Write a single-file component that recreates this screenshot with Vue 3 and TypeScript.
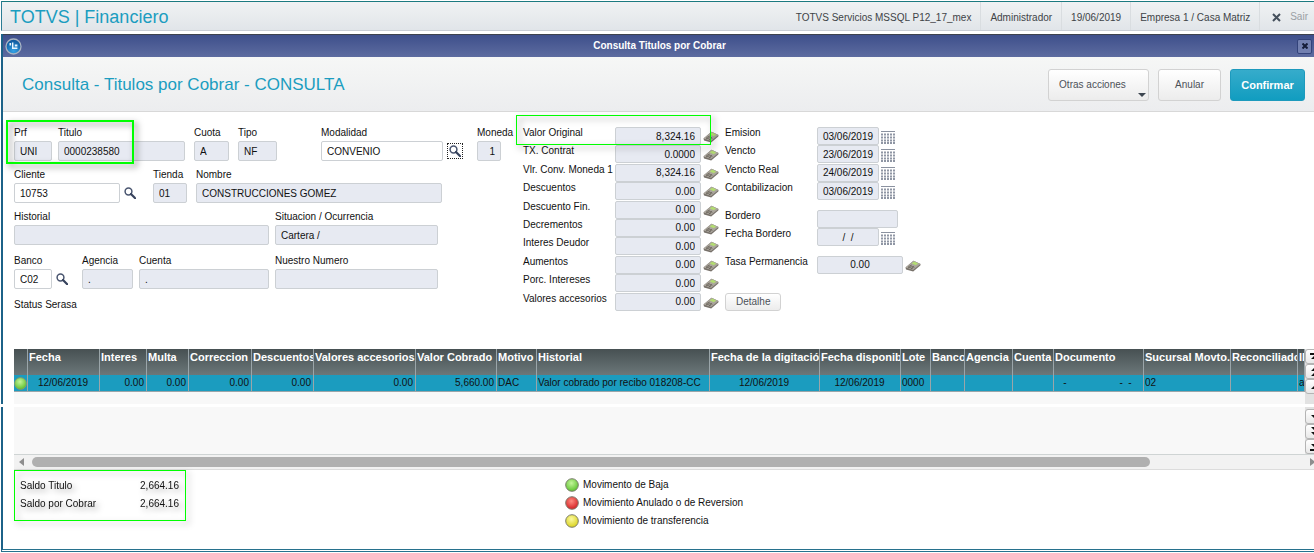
<script setup lang="ts">
import { ref } from 'vue'

interface Field {
  id: string
  label: string
  value: string
  editable?: boolean
  lookup?: boolean
  focused?: boolean
}

interface Column {
  title: string
  width: number
  value: string
  align: 'left' | 'center' | 'right'
}

const session = ['TOTVS Servicios MSSQL P12_17_mex', 'Administrador', '19/06/2019', 'Empresa 1 / Casa Matriz']

const rows = ref<Field[][]>([
  [
    { id: 'prf', label: 'Prf', value: 'UNI' },
    { id: 'titulo', label: 'Titulo', value: '0000238580' },
    { id: 'cuota', label: 'Cuota', value: 'A' },
    { id: 'tipo', label: 'Tipo', value: 'NF' },
    { id: 'modalidad', label: 'Modalidad', value: 'CONVENIO', editable: true, lookup: true, focused: true },
    { id: 'moneda', label: 'Moneda', value: '1' },
  ],
  [
    { id: 'cliente', label: 'Cliente', value: '10753', editable: true, lookup: true },
    { id: 'tienda', label: 'Tienda', value: '01' },
    { id: 'nombre', label: 'Nombre', value: 'CONSTRUCCIONES GOMEZ' },
  ],
  [
    { id: 'historial', label: 'Historial', value: '' },
    { id: 'situacion', label: 'Situacion / Ocurrencia', value: 'Cartera /' },
  ],
  [
    { id: 'banco', label: 'Banco', value: 'C02', editable: true, lookup: true },
    { id: 'agencia', label: 'Agencia', value: '.' },
    { id: 'cuenta', label: 'Cuenta', value: '.' },
    { id: 'numero', label: 'Nuestro Numero', value: '' },
  ],
])

const amounts = [
  { label: 'Valor Original', value: '8,324.16' },
  { label: 'TX. Contrat', value: '0.0000' },
  { label: 'Vlr. Conv. Moneda 1', value: '8,324.16' },
  { label: 'Descuentos', value: '0.00' },
  { label: 'Descuento Fin.', value: '0.00' },
  { label: 'Decrementos', value: '0.00' },
  { label: 'Interes Deudor', value: '0.00' },
  { label: 'Aumentos', value: '0.00' },
  { label: 'Porc. Intereses', value: '0.00' },
  { label: 'Valores accesorios', value: '0.00' },
]

const dates = [
  { id: 'emision', label: 'Emision', value: '03/06/2019', kind: 'date' },
  { id: 'vencto', label: 'Vencto', value: '23/06/2019', kind: 'date' },
  { id: 'vencto-real', label: 'Vencto Real', value: '24/06/2019', kind: 'date' },
  { id: 'contab', label: 'Contabilizacion', value: '03/06/2019', kind: 'date' },
  { id: 'bordero', label: 'Bordero', value: '', kind: 'text' },
  { id: 'fecha-bordero', label: 'Fecha Bordero', value: '/  /', kind: 'date' },
  { id: 'tasa', label: 'Tasa Permanencia', value: '0.00', kind: 'amount' },
]

const columns: Column[] = [
  { title: 'Fecha', width: 72, value: '12/06/2019', align: 'center' },
  { title: 'Interes', width: 47, value: '0.00', align: 'right' },
  { title: 'Multa', width: 42, value: '0.00', align: 'right' },
  { title: 'Correccion', width: 63, value: '0.00', align: 'right' },
  { title: 'Descuentos', width: 62, value: '0.00', align: 'right' },
  { title: 'Valores accesorios', width: 102, value: '0.00', align: 'right' },
  { title: 'Valor Cobrado', width: 81, value: '5,660.00', align: 'right' },
  { title: 'Motivo', width: 40, value: 'DAC', align: 'left' },
  { title: 'Historial', width: 173, value: 'Valor cobrado por recibo 018208-CC', align: 'left' },
  { title: 'Fecha de la digitación', width: 110, value: '12/06/2019', align: 'center' },
  { title: 'Fecha disponib.', width: 81, value: '12/06/2019', align: 'center' },
  { title: 'Lote', width: 30, value: '0000', align: 'left' },
  { title: 'Banco', width: 34, value: '', align: 'left' },
  { title: 'Agencia', width: 48, value: '', align: 'left' },
  { title: 'Cuenta', width: 41, value: '', align: 'left' },
  { title: 'Documento', width: 90, value: '   -                   -  -', align: 'left' },
  { title: 'Sucursal Movto.', width: 87, value: '02', align: 'left' },
  { title: 'Reconciliado', width: 67, value: '', align: 'left' },
  { title: 'ID', width: 7, value: 'a', align: 'left' },
]

const topArrows = [
  { name: 'Primero', path: 'M1 2h10v2H1z M6 4l4 4H2z' },
  { name: 'Página anterior', path: 'M6 1l4 4H2z M6 6l4 4H2z' },
  { name: 'Anterior', path: 'M6 4l4 4H2z' },
]
const bottomArrows = [
  { name: 'Siguiente', path: 'M6 8l4-4H2z' },
  { name: 'Página siguiente', path: 'M6 5l4-4H2z M6 10l4-4H2z' },
  { name: 'Último', path: 'M6 7l4-4H2z M1 8h10v2H1z' },
]

const legend = [
  { color: 'green', text: 'Movimento de Baja' },
  { color: 'red', text: 'Movimiento Anulado o de Reversion' },
  { color: 'yellow', text: 'Movimiento de transferencia' },
]
</script>

<template>
  <div class="app">
    <svg class="defs" aria-hidden="true">
      <defs>
        <radialGradient id="g-green" cx=".45" cy=".35" r=".65"><stop offset="0" stop-color="#c4f59a" /><stop offset="1" stop-color="#5cc22e" /></radialGradient>
        <radialGradient id="g-red" cx=".45" cy=".35" r=".65"><stop offset="0" stop-color="#ff8a80" /><stop offset="1" stop-color="#d31f22" /></radialGradient>
        <radialGradient id="g-yellow" cx=".45" cy=".35" r=".65"><stop offset="0" stop-color="#fbf9a0" /><stop offset="1" stop-color="#d9d21c" /></radialGradient>
        <radialGradient id="g-blue" cx=".5" cy=".8" r=".8"><stop offset="0" stop-color="#35a3e6" /><stop offset="1" stop-color="#0a4f94" /></radialGradient>
        <symbol id="lens" viewBox="0 0 12 12">
          <circle cx="4.5" cy="4.5" r="3.4" fill="#fff" stroke="#4a5670" stroke-width="1.5" />
          <path d="M7 7l4.2 4.2" stroke="#36425c" stroke-width="2.2" stroke-linecap="round" />
        </symbol>
        <symbol id="calc" viewBox="0 0 16 12">
          <path d="M.5 7.5L8.5.8 15.5 4 15.3 5.6 8.2 11.6 1 9.4z" fill="#77716a" />
          <path d="M.5 7.5L8.5.8 15.5 4 8 10z" fill="#aaa59c" />
          <path d="M6.7 3.6L9.2 1.6 13.2 3.4 10.8 5.3z" fill="#b3dc72" />
          <path d="M3 6.7l4.8 2M4.6 5.4l4.8 2M3 8.2L6.6 5M6 9L9 6.2" stroke="#686259" stroke-width=".8" />
        </symbol>
        <symbol id="calendar" viewBox="0 0 14 13">
          <path d="M0 .5h14" stroke="#8b92a0" />
          <path d="M0 3.5h14M0 6.5h14M0 9.5h14M0 12h14" stroke="#8f96a4" stroke-width="2" stroke-dasharray="2 1" />
        </symbol>
      </defs>
    </svg>

    <header class="topbar">
      <h1 class="brand">TOTVS | Financiero</h1>
      <ul class="session">
        <li v-for="item in session" :key="item">{{ item }}</li>
      </ul>
      <button class="exit" type="button">
        <svg width="9" height="9" viewBox="0 0 9 9"><path d="M1 1l7 7M8 1L1 8" stroke="#45505c" stroke-width="2" /></svg>
        Sair
      </button>
    </header>

    <main class="window">
      <div class="titlebar">
        <svg class="logo" width="17" height="17" viewBox="0 0 17 17">
          <circle cx="8.5" cy="8.5" r="7.5" fill="url(#g-blue)" stroke="#a9b3c2" stroke-width="1.3" />
          <path d="M4.5 5h1.6v2.5H4.5zM7 4.5h1.4v5h4V11H7zM9.8 6.5h2.6v2H9.8z" fill="#e9f6ff" />
        </svg>
        <h2>Consulta Titulos por Cobrar</h2>
        <button class="close" type="button" aria-label="Cerrar">
          <svg width="6" height="6" viewBox="0 0 6 6"><path d="M.5.5l5 5M5.5.5l-5 5" stroke="#141c38" stroke-width="2" /></svg>
        </button>
      </div>

      <div class="toolbar">
        <h3>Consulta - Titulos por Cobrar - CONSULTA</h3>
        <button class="btn more" type="button">
          Otras acciones
          <svg class="caret" width="8" height="4" viewBox="0 0 8 4"><path d="M0 0h8L4 4z" fill="#3d4650" /></svg>
        </button>
        <button class="btn" type="button">Anular</button>
        <button class="btn primary" type="button">Confirmar</button>
      </div>

      <form class="form" @submit.prevent>
        <section class="main-fields">
          <div v-for="(row, i) in rows" :key="i" class="row" :class="'row-' + (i + 1)">
            <div v-for="f in row" :key="f.id" class="field" :class="'f-' + f.id">
              <label :for="f.id">{{ f.label }}</label>
              <div class="control">
                <input :id="f.id" v-model="f.value" type="text" :readonly="!f.editable" />
                <button v-if="f.lookup" class="lookup" :class="{ focused: f.focused }" type="button" :aria-label="'Buscar ' + f.label">
                  <svg width="12" height="12"><use href="#lens" /></svg>
                </button>
              </div>
            </div>
          </div>
          <p class="status">Status Serasa</p>
          <div class="mark mark-title"></div>
        </section>

        <section class="amounts">
          <div v-for="(a, i) in amounts" :key="a.label" class="amount">
            <label :for="'amount-' + i">{{ a.label }}</label>
            <input :id="'amount-' + i" class="num" type="text" :value="a.value" readonly />
            <button class="tool" type="button" :aria-label="'Calculadora ' + a.label"><svg width="16" height="12"><use href="#calc" /></svg></button>
          </div>
          <div class="mark mark-amount"></div>
        </section>

        <section class="dates">
          <div v-for="d in dates" :key="d.id" class="date" :class="['d-' + d.id, d.kind]">
            <label :for="d.id">{{ d.label }}</label>
            <input :id="d.id" type="text" :value="d.value" readonly />
            <button v-if="d.kind === 'date'" class="tool" type="button" :aria-label="'Calendario ' + d.label"><svg width="14" height="13"><use href="#calendar" /></svg></button>
            <button v-if="d.kind === 'amount'" class="tool" type="button" :aria-label="'Calculadora ' + d.label"><svg width="16" height="12"><use href="#calc" /></svg></button>
          </div>
          <button class="btn detail" type="button">Detalhe</button>
        </section>
      </form>

      <section class="browse">
        <div class="grid">
          <table>
            <colgroup>
              <col class="c-flag" />
              <col v-for="c in columns" :key="c.title" :style="{ width: c.width + 'px' }" />
            </colgroup>
            <thead>
              <tr>
                <th></th>
                <th v-for="c in columns" :key="c.title">{{ c.title }}</th>
              </tr>
            </thead>
            <tbody>
              <tr>
                <td class="flag"><svg width="13" height="13" viewBox="0 0 14 14"><circle cx="7" cy="7" r="6.3" fill="url(#g-green)" stroke="#8a9a6a" /></svg></td>
                <td v-for="c in columns" :key="c.title" :class="c.align">{{ c.value }}</td>
              </tr>
            </tbody>
          </table>
          <div class="scroll-v">
            <button v-for="a in topArrows" :key="a.name" type="button" :aria-label="a.name"><svg width="12" height="11"><path :d="a.path" fill="#111" /></svg></button>
            <span class="spring"></span>
            <button v-for="a in bottomArrows" :key="a.name" type="button" :aria-label="a.name"><svg width="12" height="11"><path :d="a.path" fill="#111" /></svg></button>
          </div>
        </div>
        <div class="scroll-h">
          <svg width="5" height="8" viewBox="0 0 5 8"><path d="M5 0v8L0 4z" fill="#8e8e8e" /></svg>
          <div class="track"><div class="thumb"></div></div>
          <svg width="4" height="8" viewBox="0 0 4 8"><path d="M0 0v8l4-3V3z" fill="#8e8e8e" /></svg>
        </div>
        <div class="tear"></div>
      </section>

      <footer class="summary">
        <dl class="balance">
          <dt>Saldo Titulo</dt><dd>2,664.16</dd>
          <dt>Saldo por Cobrar</dt><dd>2,664.16</dd>
        </dl>
        <ul class="legend">
          <li v-for="l in legend" :key="l.color">
            <svg width="14" height="14" viewBox="0 0 14 14"><circle cx="7" cy="7" r="6.3" :fill="`url(#g-${l.color})`" stroke="#7d7d70" /></svg>
            {{ l.text }}
          </li>
        </ul>
      </footer>
    </main>
  </div>
</template>

<style>
body {
  background: #fff;
}
</style>

<style scoped>
* {
  box-sizing: border-box;
}
.app {
  position: relative;
  display: flex;
  flex-direction: column;
  min-height: 100vh;
  padding: 1px 0 1px 1px;
  overflow: hidden;
  font: 10px/12px "Liberation Sans", Arial, sans-serif;
  color: #111;
}
.defs {
  position: absolute;
  width: 0;
  height: 0;
}
h1, h2, h3, p, ul, dl, dd {
  margin: 0;
  padding: 0;
  font-weight: normal;
  list-style: none;
}
button, input {
  font: inherit;
  color: inherit;
  margin: 0;
  padding: 0;
}
button {
  border: 0;
  background: none;
}
svg {
  display: block;
  flex: none;
}

.topbar {
  display: flex;
  align-items: stretch;
  height: 30px;
  border-top: 1px solid #1c7a80;
  border-left: 1px solid #2c7c94;
  border-bottom: 1px solid #c9ced6;
  background: linear-gradient(#f0f2f3, #e1e5e9);
  color: #3e4347;
}
.brand {
  flex: 1;
  padding-left: 8px;
  font-size: 18px;
  line-height: 31px;
  color: #1b9dc0;
}
.session {
  display: flex;
}
.session li {
  padding: 0 9px;
  line-height: 31px;
  border-right: 1px solid #d9dde0;
}
.exit {
  display: flex;
  align-items: center;
  gap: 9px;
  padding: 2px 6px 0 12px;
  color: #9a9fa4;
}

.window {
  flex: 1;
  display: flex;
  flex-direction: column;
  margin-top: 3px;
  border-left: 2px solid #1c6288;
  border-bottom: 3px double #27718d;
}
.titlebar {
  display: flex;
  align-items: center;
  height: 23px;
  padding: 0 2px;
  border-top: 1px solid #3d424d;
  background: linear-gradient(#3e4f8b, #5d6ca0);
}
.titlebar h2 {
  flex: 1;
  text-align: center;
  font-size: 10px;
  font-weight: bold;
  color: #fff;
}
.close {
  display: grid;
  place-items: center;
  width: 15px;
  height: 15px;
  border: 1px solid #33437a;
  border-radius: 2px;
  background: #7280b0;
}

.toolbar {
  display: flex;
  align-items: center;
  gap: 9px;
  height: 55px;
  padding: 2px 9px 0 19px;
  border-bottom: 1px solid #d8d8d8;
  background: linear-gradient(#f6f7f6, #ecedef);
}
.toolbar h3 {
  flex: 1;
  font-size: 17px;
  line-height: 20px;
  color: #1b9dc0;
}
.btn {
  height: 32px;
  padding: 0 16px;
  border: 1px solid #d2d2d2;
  border-radius: 3px;
  background: linear-gradient(#fff, #ececec);
  color: #4c5158;
}
.toolbar .btn {
  min-width: 62px;
}
.btn.more {
  position: relative;
  min-width: 101px;
  padding: 0 20px 0 10px;
  text-align: left;
}
.caret {
  position: absolute;
  right: 2px;
  bottom: 3px;
}
.toolbar .btn.primary {
  min-width: 75px;
  padding: 0 10px;
  border-color: #1d9abd;
  background: linear-gradient(#36accb, #119dc0);
  color: #fff;
  font-size: 11px;
  font-weight: bold;
}

.form {
  display: grid;
  grid-template-columns: minmax(0, 509fr) minmax(0, 202fr) minmax(0, 589fr);
  height: 237px;
  padding: 15px 0 0 11px;
}
input {
  display: block;
  width: 100%;
  min-width: 0;
  height: 20px;
  padding: 0 5px;
  border: 1px solid #ccd0d4;
  border-radius: 2px;
  background: #fff;
  outline: 0;
}
input[readonly] {
  background: #e7eaf2;
}
label {
  white-space: nowrap;
}
.main-fields {
  position: relative;
  display: flex;
  flex-direction: column;
  gap: 8px;
}
.row {
  display: grid;
}
.row-1 { grid-template-columns: 44fr 136fr 44fr 83fr 156fr 46fr; }
.row-2 { grid-template-columns: 139fr 43fr 327fr; }
.row-3 { grid-template-columns: 261fr 248fr; }
.row-4 { grid-template-columns: 68fr 57fr 136fr 248fr; margin-top: 2px; }
.field {
  display: flex;
  flex-direction: column;
  gap: 2px;
  min-width: 0;
}
.control {
  display: flex;
  align-items: center;
  gap: 4px;
}
.f-prf, .f-historial, .f-cuenta, .f-agencia { padding-right: 6px; }
.f-titulo, .f-cuota, .f-tienda { padding-right: 9px; }
.f-tipo { padding-right: 44px; }
.f-modalidad, .f-banco { padding-right: 14px; }
.f-moneda { padding-right: 22px; }
.f-cliente { padding-right: 17px; }
.f-nombre { padding-right: 81px; }
.f-situacion, .f-numero { padding-right: 85px; }
.f-moneda input { text-align: right; }
.lookup.focused {
  padding: 1px;
  border: 1px dotted #222;
}
.status {
  margin-top: 2px;
}

.mark {
  position: absolute;
  border: 1px solid #0f0;
  filter: drop-shadow(3px 3px 3px rgba(0, 0, 0, .5));
  pointer-events: none;
}
.mark-title {
  top: -7px;
  left: -8px;
  width: 128px;
  height: 44px;
  border-width: 2px;
}
.mark-amount {
  top: -12px;
  left: -7px;
  right: 14px;
  height: 30px;
}

.amounts, .dates {
  display: grid;
  position: relative;
  height: 184px;
}
.amounts {
  grid-template-rows: repeat(10, minmax(0, 1fr));
}
.amount {
  display: grid;
  grid-template-columns: minmax(0, 92fr) minmax(0, 86fr) 24px;
  align-items: start;
}
.amount input, .date input {
  height: 18px;
}
.amount .num, .date.amount input {
  text-align: right;
}
.tool {
  height: 18px;
  padding: 2px 0 0 2px;
}
.dates {
  grid-template-rows: repeat(20, minmax(0, 1fr));
}
.date {
  display: grid;
  grid-template-columns: 92px 62px 20px;
  grid-row: span 2;
  align-items: start;
}
.date.text {
  grid-template-columns: 92px 81px;
}
.date.amount {
  grid-template-columns: 92px 86px 20px;
}
.date.date input {
  padding: 0;
  text-align: center;
}
.date.date .tool {
  padding-left: 2px;
}
.d-bordero { grid-row: 10 / span 2; }
.d-fecha-bordero { grid-row: 12 / span 2; }
.d-tasa { grid-row: 15 / span 2; }
.d-fecha-bordero input { white-space: pre; }
.detail {
  grid-row: 19 / span 2;
  justify-self: start;
  height: 18px;
  padding: 0 10px;
}

.browse {
  position: relative;
  margin-left: 11px;
}
.grid {
  display: flex;
  align-items: flex-start;
  height: 105px;
  background: #f8f8f8;
}
table {
  flex: 1;
  width: 0;
  table-layout: fixed;
  border-collapse: separate;
  border-spacing: 0;
}
.c-flag {
  width: 14px;
}
th, td {
  padding: 0 2px 0 1px;
  overflow: hidden;
  white-space: pre;
  border-right: 1px solid #9aa5a9;
}
th {
  height: 26px;
  padding-top: 2px;
  padding-right: 0;
  vertical-align: top;
  text-align: left;
  font-size: 11px;
  font-weight: bold;
  color: #fff;
  background: linear-gradient(#475052, #6b7779);
}
td {
  height: 17px;
  background: #1b9cbf;
  border-bottom: 1px solid #9aa5a9;
}
.left { text-align: left; }
.center { text-align: center; }
.right { text-align: right; }
td.flag {
  padding: 0;
}
.scroll-v {
  display: flex;
  flex-direction: column;
  align-self: stretch;
  width: 9px;
  overflow: hidden;
  background: #e2e2e2;
}
.scroll-v button {
  width: 20px;
  height: 15px;
  padding: 0 3px;
  flex: none;
  border: 1px solid #b4b4b4;
  border-radius: 3px;
  background: linear-gradient(#fff, #e8e8e8);
}
.spring {
  flex: 1;
}
.scroll-h {
  display: flex;
  align-items: center;
  gap: 8px;
  height: 16px;
  padding-left: 5px;
  border-top: 1px solid #cfd4d4;
  border-bottom: 1px solid #dcdcdc;
  background: #f2f2f2;
}
.track {
  flex: 1;
}
.thumb {
  width: 88%;
  height: 10px;
  border-radius: 5px;
  background: #b0b0b0;
}
.tear {
  position: absolute;
  top: 55px;
  left: -13px;
  right: 0;
  height: 3px;
  background: #fff;
}

.summary {
  display: grid;
  grid-template-columns: 551fr 749fr;
  align-items: start;
  margin-left: 11px;
}
.balance {
  display: grid;
  grid-template-columns: 1fr auto;
  row-gap: 6px;
  width: 172px;
  padding: 9px 6px 10px 5px;
  border: 1px solid #0f0;
  filter: drop-shadow(3px 3px 3px rgba(0, 0, 0, .35));
}
.legend {
  display: flex;
  flex-direction: column;
  gap: 4px;
  padding-top: 8px;
}
.legend li {
  display: flex;
  align-items: center;
  gap: 4px;
}
</style>
